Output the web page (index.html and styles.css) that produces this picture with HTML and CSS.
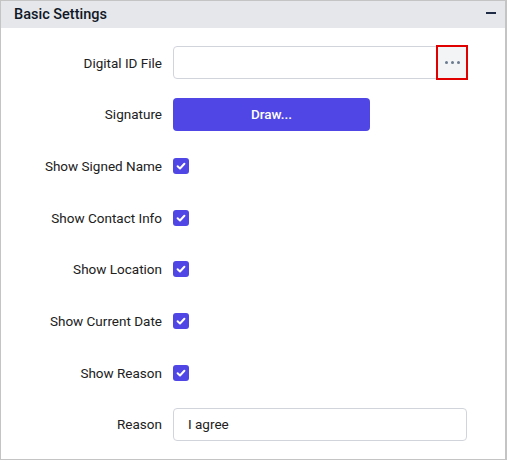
FILE: index.html
```html
<!DOCTYPE html>
<html>
<head>
<meta charset="utf-8">
<link rel="stylesheet" href="styles.css">
</head>
<body>
<div class="panel">
  <div class="header">
    <span class="title">Basic Settings</span>
    <span class="minus"></span>
  </div>
  <div class="content">
    <div class="row">
      <label class="label">Digital ID File</label>
      <div class="control">
        <div class="file-input">
          <div class="file-text"></div>
          <div class="dots-btn"><span class="dot"></span><span class="dot"></span><span class="dot"></span></div>
        </div>
      </div>
    </div>
    <div class="row">
      <label class="label">Signature</label>
      <div class="control">
        <button class="draw-btn">Draw...</button>
      </div>
    </div>
    <div class="row">
      <label class="label">Show Signed Name</label>
      <div class="control"><span class="check"><svg viewBox="0 0 16 16" width="16" height="16"><path d="M4.6 8.3 L7 10.5 L11.4 5.8" fill="none" stroke="#fff" stroke-width="2" stroke-linecap="round" stroke-linejoin="round"/></svg></span></div>
    </div>
    <div class="row">
      <label class="label">Show Contact Info</label>
      <div class="control"><span class="check"><svg viewBox="0 0 16 16" width="16" height="16"><path d="M4.6 8.3 L7 10.5 L11.4 5.8" fill="none" stroke="#fff" stroke-width="2" stroke-linecap="round" stroke-linejoin="round"/></svg></span></div>
    </div>
    <div class="row">
      <label class="label">Show Location</label>
      <div class="control"><span class="check"><svg viewBox="0 0 16 16" width="16" height="16"><path d="M4.6 8.3 L7 10.5 L11.4 5.8" fill="none" stroke="#fff" stroke-width="2" stroke-linecap="round" stroke-linejoin="round"/></svg></span></div>
    </div>
    <div class="row">
      <label class="label">Show Current Date</label>
      <div class="control"><span class="check"><svg viewBox="0 0 16 16" width="16" height="16"><path d="M4.6 8.3 L7 10.5 L11.4 5.8" fill="none" stroke="#fff" stroke-width="2" stroke-linecap="round" stroke-linejoin="round"/></svg></span></div>
    </div>
    <div class="row">
      <label class="label">Show Reason</label>
      <div class="control"><span class="check"><svg viewBox="0 0 16 16" width="16" height="16"><path d="M4.6 8.3 L7 10.5 L11.4 5.8" fill="none" stroke="#fff" stroke-width="2" stroke-linecap="round" stroke-linejoin="round"/></svg></span></div>
    </div>
    <div class="row">
      <label class="label">Reason</label>
      <div class="control">
        <div class="text-input">I agree</div>
      </div>
    </div>
  </div>
</div>
</body>
</html>
```

FILE: styles.css
```css
* { box-sizing: border-box; }
html, body {
  margin: 0;
  padding: 0;
  background: #ffffff;
}
body {
  font-family: Roboto, "Liberation Sans", sans-serif;
  color: #212121;
}
.panel {
  width: 507px;
  height: 460px;
  border: 1px solid #c4c4c4;
  border-right-width: 2px;
  display: flex;
  flex-direction: column;
}
.header {
  height: 27px;
  background: #e5e7eb;
  display: flex;
  align-items: center;
  justify-content: space-between;
  padding: 0 9px 0 13px;
}
.title {
  font-size: 14.5px;
  font-weight: 500;
  color: #111827;
}
.minus {
  width: 10px;
  height: 2px;
  background: #1f2a44;
  margin-top: -3px;
}
.content {
  display: flex;
  flex-direction: column;
  gap: 18.7px;
  padding-top: 18px;
}
.row {
  display: grid;
  grid-template-columns: 161px 294px;
  column-gap: 11px;
  align-items: center;
  height: 33px;
}
.label {
  text-align: right;
  font-size: 13.5px;
  color: #212121;
}
.control {
  display: flex;
  align-items: center;
  height: 33px;
}
.file-input {
  width: 294px;
  height: 33px;
  border: 1px solid #d1d5db;
  border-radius: 4px;
  display: flex;
}
.file-text { flex: 1; }
.dots-btn {
  width: 30px;
  height: 33px;
  background: #f3f4f6;
  display: flex;
  align-items: center;
  justify-content: center;
  gap: 3px;
  border-radius: 0;
  outline: 2px solid #e00000;
  outline-offset: -1px;
  margin-top: -1px;
  margin-right: -1px;
}
.dot {
  width: 3px;
  height: 3px;
  border-radius: 50%;
  background: #6b7a90;
}
.draw-btn {
  width: 197px;
  height: 33px;
  border: none;
  border-radius: 4px;
  background: #4f46e5;
  color: #ffffff;
  font-family: Roboto, "Liberation Sans", sans-serif;
  font-size: 13.5px;
  font-weight: 500;
  padding: 0;
}
.check {
  width: 16px;
  height: 16px;
  border-radius: 3px;
  background: #4f46e5;
  display: inline-flex;
}
.text-input {
  width: 294px;
  height: 33px;
  border: 1px solid #d1d5db;
  border-radius: 4px;
  font-size: 13.5px;
  color: #212121;
  padding: 0 14px;
  display: flex;
  align-items: center;
}
```
